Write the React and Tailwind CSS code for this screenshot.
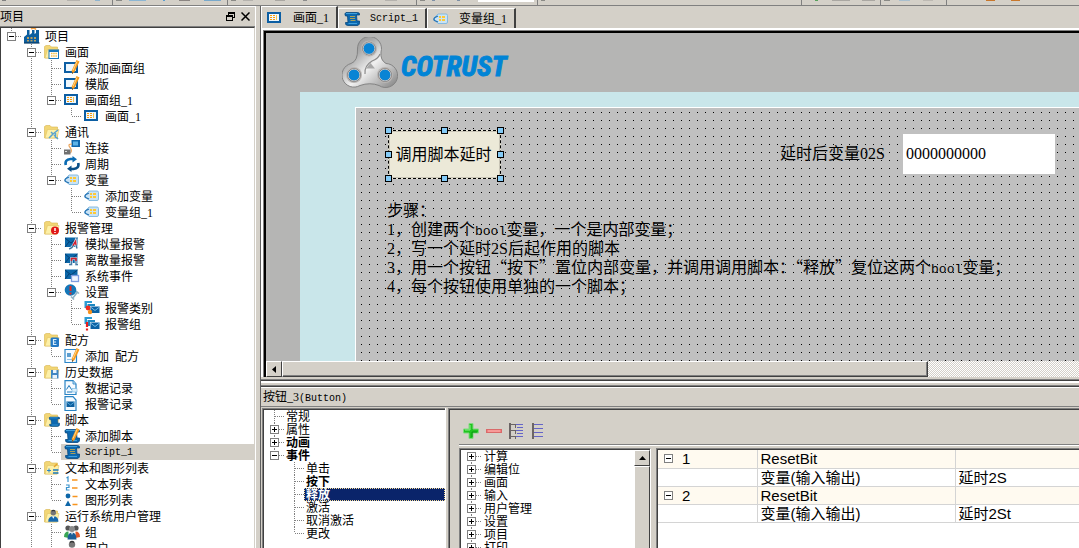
import React from "react";

const CJK = "font-['Liberation_Serif','Noto_Sans_CJK_SC',sans-serif]";

/* ---------- small drawings ---------- */

const Folder = ({ children }) => (
  <>
    <path d="M0.5 14V2.5L2 1.5H6L7.5 3H13.5V14Z" fill="#f2d675" stroke="#d9b64f" strokeWidth="0.6" />
    <path d="M1 14L3.5 5.5H15L13 14Z" fill="#fdf0a8" stroke="#e0c263" strokeWidth="0.6" />
    {children}
  </>
);

const Scroll = () => (
  <>
    <path d="M2 1.500H13.500Q16 1.500 15.500 4H12.500L13 10H15.500Q16 14.500 13 14.500H4Q1 14.500 1.500 11.500H4L3.500 5H1.500Q0 2.500 2 1.500Z" fill="#0c68af" stroke="#07487c" strokeWidth="0.800" />
    <path d="M2 2.500H13M4.500 12.500H13" stroke="#3fa0dc" strokeWidth="1" />
  </>
);

const Pencil = () => (
  <>
    <path d="M12.500 0L15.500 1.500L10.500 12L8 14L7.800 10.500Z" fill="#f79a1e" />
    <path d="M13 1.500L9 10.500" stroke="#ffd98a" strokeWidth="1" />
    <path d="M8 14V12L9.300 12.800Z" fill="#444" />
  </>
);

const Frame = () => (
  <>
    <rect x="0" y="2" width="14" height="11" fill="#0c5ea3" />
    <rect x="2" y="4" width="10" height="7" fill="#eef7fd" />
  </>
);

const Tag = () => (
  <>
    <path d="M5 3H13Q14.500 3 14.500 4.500V11Q14.500 12.500 13 12.500H5L1.500 9V6.500Z" fill="#c9e3f5" stroke="#7db5de" strokeWidth="0.900" />
    <path d="M5 5L2 6.500Q0 8 1.500 9.500L5 11" fill="none" stroke="#2372b4" strokeWidth="1.300" />
    <path d="M6 5h2v2h-2zM9 5h3v2h-3zM6 8h2v2h-2zM9 8h3v2h-3z" fill="#ffc933" />
  </>
);

const Monitor = () => (
  <>
    <path d="M1 1.500H13.500V11H1Z" fill="#0b67a9" />
    <path d="M1 2L7 7L13.500 2M1 11L5 6" stroke="#063f73" strokeWidth="1" fill="none" />
  </>
);

const Envelopes = () => (
  <>
    <path d="M0.500 1H8V3H3V8H0.500Z" fill="#2c9bd2" />
    <path d="M3.500 4H11V6H6V10H3.500Z" fill="#1d87c1" />
    <path d="M6.500 6.500H15.500V13H6.500Z" fill="#0b62a4" />
    <path d="M6.500 7L11 10.500L15.500 7" stroke="#7fc6ee" strokeWidth="0.900" fill="none" />
  </>
);

const Person = () => (
  <>
    <circle cx="8" cy="4.500" r="3.200" fill="#777" />
    <path d="M6 2.500Q8 0.500 10 2.500" stroke="#333" strokeWidth="1.400" fill="none" />
    <path d="M2 15Q2 8.500 8 8.500Q14 8.500 14 15Z" fill="#1769ae" />
    <path d="M6.500 8.500L8 11.500L9.500 8.500Z" fill="#fff" />
  </>
);

const DRAWINGS = {
  project: (
    <>
      <path d="M0 15V9L3 6.500V2H5.500V7L8 5V2H10.500V6L12 5V2H15V15Z" fill="#0d5f9f" />
      <path d="M7 1Q10 -1 12 1.500" stroke="#f6a243" strokeWidth="1.500" fill="none" />
      <path d="M3 9h2v2h-2zM6.500 9h2v2h-2zM10 9h2v2h-2zM3 12h2v1.500h-2zM6.500 12h2v1.500h-2zM10 12h2v1.500h-2z" fill="#b99e61" />
      <path d="M0 15H15.500" stroke="#083b66" strokeWidth="1.200" />
    </>
  ),
  folderScreen: (
    <Folder>
      <rect x="5" y="6" width="9.500" height="8.500" fill="#fff" stroke="#1a77bb" />
      <path d="M5 7H14.500" stroke="#1a77bb" strokeWidth="2" />
      <path d="M7 9.500H13M7 12H13" stroke="#f2c047" strokeWidth="1.500" strokeDasharray="1.500 0.700" />
    </Folder>
  ),
  folderLink: (
    <Folder>
      <path d="M5 14L9 10L7 8M9 10L14 6M10 11L14 15M11.500 9V14" stroke="#5aa3cf" strokeWidth="1.500" fill="none" />
    </Folder>
  ),
  folderAlarm: (
    <Folder>
      <circle cx="11" cy="10.500" r="4" fill="#e01818" />
      <path d="M11 8V11M11 12V13" stroke="#fff" strokeWidth="1.500" />
    </Folder>
  ),
  folderRecipe: (
    <Folder>
      <rect x="6.500" y="5.500" width="8.500" height="9.500" rx="1.500" fill="#2479c4" />
      <path d="M12.500 7.500H9.500V12.500H12.500M9 10H12" stroke="#d6ecfb" strokeWidth="1.200" fill="none" />
    </Folder>
  ),
  folderHistory: (
    <Folder>
      <path d="M7 6H14.500V14.500H7Z" fill="#3f86c2" />
      <path d="M9 6H12.500V9H9ZM8.500 11H13V14.500H8.500Z" fill="#e8f3fb" />
    </Folder>
  ),
  folderScript: (
    <Folder>
      <g transform="translate(4.500 4) scale(0.720)"><Scroll /></g>
    </Folder>
  ),
  folderList: (
    <Folder>
      <path d="M5 8.500V12.500M3 10.500H7" stroke="#2b86c5" strokeWidth="1" />
      <path d="M9 10H14.500M9 13H14.500" stroke="#1b79bf" strokeWidth="1.500" />
      <path d="M10 7L13 4" stroke="#e6a32a" strokeWidth="1.500" />
    </Folder>
  ),
  folderUser: (
    <Folder>
      <g transform="translate(2.500 1) scale(0.850)"><Person /></g>
    </Folder>
  ),
  screenEdit: (<><Frame /><Pencil /></>),
  screen: (
    <>
      <Frame />
      <path d="M3 5h2v1h-2zM6 5h2v1h-2zM3 7h2v1h-2zM6 7h2v1h-2zM3 9h2v1h-2zM6 9h2v1h-2z" fill="#f59a0f" />
      <path d="M9.500 5V10" stroke="#f5c34f" strokeWidth="1" />
    </>
  ),
  connect: (
    <>
      <rect x="7.500" y="0" width="8.500" height="7" fill="#0f66ad" />
      <rect x="9" y="1.500" width="5" height="4" fill="#5db3e8" />
      <path d="M8 4Q3 4 6 7.500Q8.500 10.500 6.500 13" stroke="#eca45a" strokeWidth="1.200" fill="none" />
      <rect x="0" y="9.500" width="6.500" height="5" fill="#707070" />
      <path d="M1 11.500H3" stroke="#ddd" />
    </>
  ),
  cycle: (
    <>
      <path d="M1.800 9Q0.500 3.500 6.500 3H9" stroke="#0b6cb4" strokeWidth="2.700" fill="none" />
      <path d="M8.500 0L13 3.300L8.500 6.500Z" fill="#0b6cb4" />
      <path d="M14.200 7Q15.500 12.500 9.500 13H7" stroke="#0a4f88" strokeWidth="2.700" fill="none" />
      <path d="M7.500 9.500L3 12.800L7.500 16Z" fill="#0a4f88" />
    </>
  ),
  tag: <Tag />,
  analog: (
    <>
      <Monitor />
      <path d="M5 13Q8.500 12 9.500 9L11.500 5L12.500 11L14 12" stroke="#e6f2fa" strokeWidth="2.500" fill="none" />
      <path d="M5 13Q8.500 12 9.500 9" stroke="#3d6f96" strokeWidth="1.300" fill="none" />
      <path d="M9 9.500L11.500 5.500L12 9" stroke="#d11f2f" strokeWidth="1.500" fill="none" />
      <path d="M12 9L13 12.500" stroke="#3d6f96" strokeWidth="1.300" />
    </>
  ),
  discrete: (
    <>
      <Monitor />
      <path d="M5 12.500H7.500V6.500H12V12.500H14" stroke="#e6f2fa" strokeWidth="2.600" fill="none" />
      <path d="M5 12.500H7.500V6.500H12V12.500H14" stroke="#4a7ba2" strokeWidth="1.300" fill="none" />
      <path d="M7.500 9V6.500H12V9" stroke="#d11f2f" strokeWidth="1.500" fill="none" />
    </>
  ),
  event: (
    <>
      <Monitor />
      <rect x="7.500" y="7.500" width="7" height="6" fill="#eff5ff" stroke="#7f9de0" strokeWidth="1.300" />
    </>
  ),
  settings: (
    <>
      <path d="M8.500 14.500L13.500 8M7 12.500L10 15.500M12 7L15 9.500" stroke="#8fb3c7" strokeWidth="1.600" fill="none" />
      <circle cx="6.500" cy="6" r="5.800" fill="#1477b9" />
      <path d="M6.500 2V7M6.500 8.500V10.500" stroke="#e22a24" strokeWidth="2" />
    </>
  ),
  alarmClass: (
    <>
      <Envelopes />
      <circle cx="4" cy="8" r="2.400" fill="#ee2a1e" />
      <circle cx="6" cy="12" r="2.200" fill="#f7931d" />
    </>
  ),
  alarmGroup: (
    <>
      <Envelopes />
      <path d="M3 6V11M3 12.500V14.500" stroke="#ea1d1d" strokeWidth="2.200" />
    </>
  ),
  recipe: (
    <>
      <path d="M1 1.500H12.500V14.500H1Z" fill="#f4faff" stroke="#2c86c8" strokeWidth="1.200" />
      <path d="M3 5H7V9H3Z" fill="#5d9ecf" />
      <path d="M3 11.500H8" stroke="#93c3e6" />
      <Pencil />
    </>
  ),
  dataLog: (
    <>
      <path d="M1 0.700H9L12 4V14.500H1Z" fill="#f6fbff" stroke="#2a84c4" strokeWidth="1.200" />
      <path d="M9 0.700V4H12" fill="#bfe0f5" stroke="#2a84c4" strokeWidth="0.800" />
      <path d="M2.500 9.500L5 5.500L7.500 9.500H11M3 12H8" stroke="#1d76b9" strokeWidth="1" fill="none" />
      <path d="M8 8.500H13V12H8Z" fill="#daeefa" stroke="#6fb3df" strokeWidth="0.600" />
    </>
  ),
  alarmLog: (
    <>
      <path d="M1 0.700H9L12 4V14.500H1Z" fill="#f6fbff" stroke="#2a84c4" strokeWidth="1.200" />
      <path d="M2.500 5.500H10.500V11H2.500Z" fill="#0d5f9f" />
      <path d="M2.500 6L6.500 9L10.500 6" stroke="#5aaee0" strokeWidth="0.900" fill="none" />
    </>
  ),
  scriptEdit: (<><Scroll /><Pencil /></>),
  script: (
    <>
      <Scroll />
      <path d="M6 5.500H11M6 7.500H11M6.500 9.500H11.500" stroke="#a9a05a" strokeWidth="1" />
    </>
  ),
  textList: (
    <>
      <path d="M2.500 2L4 1V6M2 9H5V11.500H2.500V14H5.500" stroke="#3a93cd" strokeWidth="1.200" fill="none" />
      <path d="M8 4H13.500M8 12H13.500" stroke="#f7941e" strokeWidth="1.700" />
    </>
  ),
  graphicList: (
    <>
      <circle cx="4" cy="4" r="2.400" fill="#0d66a8" />
      <path d="M1 14L4 8.500L7 14Z" fill="#0d66a8" />
      <path d="M8.500 4.500H13.500M8.500 12.500H13.500" stroke="#f7941e" strokeWidth="1.700" />
    </>
  ),
  group: (
    <>
      <circle cx="4" cy="4" r="2.600" fill="#555" />
      <circle cx="12" cy="4" r="2.600" fill="#555" />
      <path d="M0 13Q0 7.500 4.500 7.500V14Z" fill="#3aa655" />
      <path d="M16 13Q16 7.500 11.500 7.500V14Z" fill="#e2592b" />
      <circle cx="8" cy="5" r="3" fill="#8c8c8c" />
      <path d="M3.500 15.500Q3.500 8.500 8 8.500Q12.500 8.500 12.500 15.500Z" fill="#1c5d96" />
      <path d="M7 8.500L8 11L9 8.500Z" fill="#fff" />
    </>
  ),
  user: <Person />,
};

const Icon = ({ name }) => (
  <svg viewBox="0 0 16 16" className="size-4 shrink-0" aria-hidden="true">
    {DRAWINGS[name]}
  </svg>
);

/* ---------- tree pieces ---------- */

// One 20px column of connector lines, with the optional +/- box.
function Connector({ up, down, arm, box, height }) {
  const mid = height === 16 ? 8 : 6;
  return (
    <svg width="20" height={height} viewBox={`0 0 20 ${height}`} className="block shrink-0" shapeRendering="crispEdges">
      <g stroke="#808080" strokeDasharray="1 1">
        {up && <path d={`M10.500 0V${mid}`} />}
        {down && <path d={`M10.500 ${mid}V${height}`} />}
        {arm && <path d={`M11 ${mid + 0.5}H20`} />}
      </g>
      {box && (
        <>
          <rect x="6.500" y={mid - 3.5} width="8" height="8" fill="#fff" stroke="#808080" />
          <path d={`M8 ${mid + 0.5}H13`} stroke="#000" />
          {box === "+" && <path d={`M10.500 ${mid - 2}V${mid + 3}`} stroke="#000" />}
        </>
      )}
    </svg>
  );
}

function Toggle({ box, label, ...rest }) {
  if (!box) return <Connector {...rest} />;
  return (
    <button type="button" aria-label={label} aria-expanded={box === "-"} className="block shrink-0">
      <Connector box={box} {...rest} />
    </button>
  );
}

// [depth, icon, label, box, last sibling, text kind]
const PROJECT = [
  [0, "project", "项目", "-", true],
  [1, "folderScreen", "画面", "-"],
  [2, "screenEdit", "添加画面组"],
  [2, "screenEdit", "模版"],
  [2, "screen", "画面组_1", "-", true],
  [3, "screen", "画面_1", "", true],
  [1, "folderLink", "通讯", "-"],
  [2, "connect", "连接"],
  [2, "cycle", "周期"],
  [2, "tag", "变量", "-", true],
  [3, "tag", "添加变量"],
  [3, "tag", "变量组_1", "", true],
  [1, "folderAlarm", "报警管理", "-"],
  [2, "analog", "模拟量报警"],
  [2, "discrete", "离散量报警"],
  [2, "event", "系统事件"],
  [2, "settings", "设置", "-", true],
  [3, "alarmClass", "报警类别"],
  [3, "alarmGroup", "报警组", "", true],
  [1, "folderRecipe", "配方", "-"],
  [2, "recipe", "添加  配方", "", true],
  [1, "folderHistory", "历史数据", "-"],
  [2, "dataLog", "数据记录"],
  [2, "alarmLog", "报警记录", "", true],
  [1, "folderScript", "脚本", "-"],
  [2, "scriptEdit", "添加脚本"],
  [2, "script", "Script_1", "", true, "mono"],
  [1, "folderList", "文本和图形列表", "-"],
  [2, "textList", "文本列表"],
  [2, "graphicList", "图形列表", "", true],
  [1, "folderUser", "运行系统用户管理", "-"],
  [2, "group", "组"],
  [2, "user", "用户"],
];

function ProjectRow({ row }) {
  const [depth, icon, label, box, last, kind] = row;
  const selected = kind === "mono";
  return (
    <li className="flex h-4 items-center whitespace-pre">
      {Array.from({ length: depth }, (_, i) => (
        <Connector key={i} height={16} up={i === 1} down={i === 1} />
      ))}
      <Toggle box={box} label={label} height={16} up={true} down={!last} arm />
      <span className={`flex h-4 flex-1 items-center gap-[5px] pl-[3px] ${selected ? "bg-[#d4d0c8]" : ""}`}>
        <Icon name={icon} />
        <span className={kind === "mono" ? "pt-px font-['Liberation_Mono',monospace] text-[10px]" : "pt-px"}>{label}</span>
      </span>
    </li>
  );
}

const PROPERTIES = [
  [0, "常规"],
  [0, "属性", "+"],
  [0, "动画", "+", true],
  [0, "事件", "-", true],
  [1, "单击"],
  [1, "按下", "", true],
  [1, "释放", "", true],
  [1, "激活"],
  [1, "取消激活"],
  [1, "更改"],
];

const FUNCTIONS = ["计算", "编辑位", "画面", "输入", "用户管理", "设置", "项目", "打印"];

const INSET = "border-t border-l border-[#808080]";
const INSET_IN = "border-t border-l border-[#404040]";

/* ---------- top strip ---------- */

const STRIP = [
  [2, 4, "#808080"], [67, 13, "#b5b2ad"], [95, 5, "#8fb4cf"], [112, 1, "#808080"], [116, 6, "#8a8a86"],
  [129, 17, "#8cb6d3"], [163, 2, "#5b9ed0"], [179, 11, "#8b8582"], [204, 17, "#79a9cb"], [227, 1, "#808080"],
  [231, 5, "#8a8a86"], [243, 10, "#b5b2ad"], [275, 10, "#aaa7a2"], [303, 4, "#8c8c8c"], [350, 10, "#aaa7a2"],
  [385, 12, "#b5b2ad"], [416, 1, "#808080"], [420, 5, "#8a8a86"], [432, 3, "#7d8fa5"], [457, 3, "#7d8fa5"],
  [478, 56, "#ffffff"], [537, 1, "#808080"], [541, 4, "#8a8a86"], [801, 1, "#808080"], [815, 3, "#58a05c"],
  [832, 18, "#aaa7a2"], [862, 13, "#aaa7a2"], [880, 1, "#808080"], [884, 6, "#8a8a86"], [899, 11, "#a9bfce"],
  [923, 10, "#bdb9b3"], [946, 1, "#808080"], [986, 9, "#c8772c"], [1011, 9, "#c8772c"],
];

function ToolbarEdge() {
  return (
    <div className="h-[6px] shrink-0 overflow-hidden border-b border-[#808080]">
      <svg width="1079" height="5" shapeRendering="crispEdges" aria-hidden="true" className="block">
        {STRIP.map(([x, w, c]) => (
          <rect key={x} x={x} y="0" width={w} height={w === 1 ? 5 : w === 56 ? 2 : 1} fill={c} />
        ))}
      </svg>
    </div>
  );
}

/* ---------- sidebar ---------- */

function Sidebar() {
  return (
    <aside className="flex w-64 shrink-0 flex-col overflow-hidden border-r border-white">
      <header className="flex h-5 shrink-0 items-center justify-between border-t border-white pr-[5px]">
        <h2>项目</h2>
        <div className="flex items-center gap-[6px]">
          <button type="button" aria-label="还原">
            <svg width="9" height="9" shapeRendering="crispEdges" fill="none" stroke="#000">
              <path d="M2.500 3V0.500H8.500V5.500H6M2 1.500H9" />
              <path d="M0.500 3.500H6V8.500H0.500ZM0 4.500H6" />
            </svg>
          </button>
          <button type="button" aria-label="关闭">
            <svg width="9" height="9" stroke="#000" strokeWidth="1.500"><path d="M0.500 0.500L8.500 8.500M8.500 0.500L0.500 8.500" /></svg>
          </button>
        </div>
      </header>
      <div className="flex min-h-0 flex-1 flex-col border-t border-[#808080]">
        <ul className="min-h-0 flex-1 overflow-hidden border-t border-r border-l border-[#404040] border-r-[#d4d0c8] bg-white">
          {PROJECT.map((row, i) => <ProjectRow key={i} row={row} />)}
        </ul>
      </div>
    </aside>
  );
}

/* ---------- editor ---------- */

function Tab({ icon, active, children }) {
  return (
    <button
      type="button"
      role="tab"
      aria-selected={!!active}
      className={`flex items-center gap-[10px] border-t border-r-2 border-l border-white border-r-[#404040] pr-[7px] pl-[5px] ${active ? "h-[22px]" : "h-5"}`}
    >
      <Icon name={icon} />
      {children}
    </button>
  );
}

function Logo() {
  return (
    <svg width="56" height="52" viewBox="0 0 56 52" aria-hidden="true">
      <defs>
        <linearGradient id="steel" x1="0" y1="0" x2="1" y2="1">
          <stop offset="0" stopColor="#858585" />
          <stop offset="0.300" stopColor="#a9a9a9" />
          <stop offset="0.550" stopColor="#f0f0f0" />
          <stop offset="1" stopColor="#7f7f7f" />
        </linearGradient>
      </defs>
      <path d="M15.500 12A12 12 0 1 1 39 15Q38 23 44 26.500A12 12 0 1 1 37 48.500Q28 45 18 48.500A12 12 0 1 1 9 26.500Q16 24 15.500 12Z" fill="url(#steel)" stroke="#838383" strokeWidth="1" />
      <path d="M38 17Q36 22 30 24Q22 29 23 37" fill="none" stroke="#8a8a8a" strokeWidth="1.200" />
      <path d="M24 31.500L28.500 26L33 31.500Z" fill="#a8a8a8" />
      {[[27, 11.5], [12, 38], [43, 38]].map(([x, y]) => (
        <g key={x}>
          <circle cx={x} cy={y} r="8" fill="#b9b6b4" />
          <circle cx={x} cy={y} r="6.300" fill="#0a84d4" stroke="#6d5a52" strokeWidth="0.800" />
          <circle cx={x} cy={y} r="5.900" fill="none" stroke="#d8cfca" strokeWidth="0.900" />
        </g>
      ))}
    </svg>
  );
}

const HANDLES = [
  "-left-1 -top-1", "left-[52px] -top-1", "-right-1 -top-1",
  "-left-1 top-5", "-right-1 top-5",
  "-left-1 -bottom-1", "left-[52px] -bottom-1", "-right-1 -bottom-1",
];

const Latin = ({ children }) => <span className="font-['Liberation_Mono',monospace] text-[13px] leading-none">{children}</span>;
const Wide = ({ children }) => <span className="font-['Noto_Sans_CJK_SC',sans-serif] leading-none">{children}</span>;

function Canvas() {
  return (
    <div className="flex min-h-0 flex-1 flex-col overflow-hidden bg-[#b5b5b4]">
      <div className="flex h-[59px] shrink-0 items-center gap-[3px] pl-[76px]">
        <Logo />
        <span className="pt-2 font-['Liberation_Sans_Narrow','Roboto_Condensed','Liberation_Sans',sans-serif] text-[28px] leading-none font-bold text-[#0084d6] italic [-webkit-text-stroke:1px_#0084d6]">
          COTRUST
        </span>
      </div>
      <div className="ml-[34px] flex min-h-0 flex-1 bg-[#c9e6ea] pt-[15px] pl-[55px]">
        <div className="relative flex-1 overflow-hidden border-t border-l border-white bg-[#c0c0c0] bg-[conic-gradient(at_1px_1px,transparent_75%,#000_0)] bg-[length:8px_8px] bg-[position:5px_4px] text-base">
          <button type="button" className="absolute top-[22px] left-8 h-[49px] w-[113px] border border-dashed border-black bg-[#ece9d8] pr-[2px] outline-1 -outline-offset-2 outline-[#c8c4b6]">
            调用脚本延时
            {HANDLES.map((pos) => (
              <span key={pos} className={`absolute size-[7px] border border-black bg-[#84cbf7] ${pos}`} />
            ))}
          </button>
          <label htmlFor="delayed" className="absolute top-[34px] left-[424px] leading-6 whitespace-nowrap">延时后变量02S</label>
          <input id="delayed" defaultValue="0000000000" className="absolute top-[26px] left-[547px] h-10 w-[152px] bg-white px-[3px] outline-none" />
          <div className="absolute top-[93px] left-[31px] leading-[19px] whitespace-nowrap">
            <p>步骤：</p>
            <p>1，创建两个<Latin>bool</Latin>变量，一个是内部变量；</p>
            <p>2，写一个延时2S后起作用的脚本</p>
            <p>3，<Wide>用一个按钮“按下”置位内部变量，并调用调用脚本：“释放”复位这两个</Wide><Latin>bool</Latin>变量；</p>
            <p>4，每个按钮使用单独的一个脚本；</p>
          </div>
        </div>
      </div>
    </div>
  );
}

function HorizontalScroll() {
  return (
    <div className="flex h-4 shrink-0 bg-[repeating-conic-gradient(#fff_0_25%,#d4d0c8_0_50%)] bg-[length:2px_2px]">
      <button type="button" aria-label="向左" className="flex w-4 shrink-0 items-center justify-center border border-white border-r-[#404040] border-b-[#404040] bg-[#d4d0c8]">
        <svg width="4" height="7"><path d="M4 0V7L0 3.500Z" /></svg>
      </button>
      <div className="w-[calc(80%-4px)] border border-white border-r-[#404040] border-b-[#404040] bg-[#d4d0c8] shadow-[inset_-1px_-1px_0_#808080]" />
    </div>
  );
}

/* ---------- properties pane ---------- */

function PropertyTree() {
  return (
    <div className={`flex w-[183px] shrink-0 ${INSET}`}>
      <ul className={`flex-1 bg-white ${INSET_IN}`}>
        {PROPERTIES.map(([depth, label, box, bold], i) => (
          <li key={label} className={`flex h-[13px] items-center leading-[15px] ${bold ? "font-bold" : ""}`}>
            {depth === 1 && <span className="w-5 shrink-0" />}
            <Toggle box={box} label={label} height={13} up down={i !== 3 && i !== 9} arm />
            <span className={`h-[13px] flex-1 pl-[2px] ${label === "释放" ? "bg-[#0a246a] text-white outline-1 -outline-offset-1 outline-[#f5db95] outline-dotted" : ""}`}>
              {label}
            </span>
          </li>
        ))}
      </ul>
    </div>
  );
}

function FunctionToolbar() {
  return (
    <div className="flex h-[35px] shrink-0 items-end gap-[7px] border-b border-[#808080] pb-[5px] pl-1">
      <button type="button" aria-label="添加">
        <svg width="16" height="16" className="block">
          <path d="M6 0.500H10V6H15.500V10H10V15.500H6V10H0.500V6H6Z" fill="#1fc41f" stroke="#7fd87f" />
          <path d="M7 2V7H2" stroke="#8df08a" fill="none" />
          <path d="M9 14V9H14" stroke="#0c9a12" fill="none" />
        </svg>
      </button>
      <button type="button" aria-label="删除">
        <svg width="16" height="16" className="block"><rect x="0.500" y="6.500" width="15" height="3" fill="#f08080" stroke="#d96a6a" /><path d="M2 8H14" stroke="#ffb4b0" /></svg>
      </button>
      <button type="button" aria-label="展开">
        <svg width="16" height="16" className="block" shapeRendering="crispEdges" fill="none">
          <path d="M1 0V16" stroke="#6b6565" strokeWidth="2" />
          <path d="M2 1.500H7M2 7.500H7M2 13.500H7M6.500 1V5M6.500 8V11M6.500 13V16" stroke="#6b6565" />
          <path d="M7 1.500H14M8 4.500H14M7 7.500H14M8 10.500H14M7 13.500H14" stroke="#6464c8" />
        </svg>
      </button>
      <button type="button" aria-label="折叠">
        <svg width="12" height="16" className="block" shapeRendering="crispEdges" fill="none">
          <path d="M1 0V16" stroke="#6b6565" strokeWidth="2" />
          <path d="M2 1.500H11M2 5.500H11M2 9.500H11M2 13.500H11" stroke="#6464c8" />
        </svg>
      </button>
    </div>
  );
}

const CALLS = [
  ["1", "ResetBit", ""],
  ["", "变量(输入输出)", "延时2S"],
  ["2", "ResetBit", ""],
  ["", "变量(输入输出)", "延时2St"],
];

function CallTable() {
  return (
    <div className={`flex min-w-0 flex-1 ${INSET}`}>
      <div className={`min-w-0 flex-1 bg-white ${INSET_IN}`}>
        <table className="w-full table-fixed border-collapse font-['Liberation_Sans','Noto_Sans_CJK_SC',sans-serif] text-[15px] leading-[17px]">
          <colgroup>
            <col className="w-[99px]" />
            <col className="w-[198px]" />
            <col />
          </colgroup>
          <tbody>
            {CALLS.map(([num, name, value], i) => (
              <tr key={i} className={`h-[18px] border-b border-[#d4d4d4] ${num ? "bg-[#fffaf0]" : ""}`}>
                <td className="border-r border-[#d4d4d4] p-0">
                  {num && (
                    <span className="flex h-[17px] items-center">
                      <button type="button" aria-label="折叠" className="ml-[6px] mr-[9px] flex size-[9px] items-center justify-center border border-[#808080] bg-white">
                        <span className="h-px w-[5px] bg-black" />
                      </button>
                      {num}
                    </span>
                  )}
                </td>
                <td className="border-r border-[#d4d4d4] p-0 pl-[3px] whitespace-nowrap"><span className="block h-[17px]">{name}</span></td>
                <td className="p-0 pl-[3px] whitespace-nowrap"><span className="block h-[17px]">{value}</span></td>
              </tr>
            ))}
          </tbody>
        </table>
      </div>
    </div>
  );
}

function FunctionTree() {
  return (
    <div className={`flex w-48 shrink-0 border-r border-r-white ${INSET}`}>
      <div className={`flex min-w-0 flex-1 bg-white ${INSET_IN}`}>
        <ul className="flex-1 overflow-hidden">
          {FUNCTIONS.map((label, i) => (
            <li key={label} className="flex h-[13px] items-center">
              <Toggle box="+" label={label} height={13} up={i > 0} down arm />
              <span className="h-[13px] pl-[3px] leading-[15px]">{label}</span>
            </li>
          ))}
        </ul>
        <div className="flex w-4 shrink-0 flex-col bg-[#d4d0c8]">
          <button type="button" aria-label="向上" className="flex h-4 items-center justify-center border border-white border-r-[#404040] border-b-[#404040]">
            <svg width="7" height="4"><path d="M0 4H7L3.500 0Z" /></svg>
          </button>
          <div className="flex-1 border border-b-0 border-white border-r-[#404040]" />
        </div>
      </div>
    </div>
  );
}

function Properties() {
  return (
    <section className="flex h-[171px] shrink-0 flex-col">
      <div className="h-[2px] shrink-0" />
      <div className="h-[2px] shrink-0 border-t border-[#808080] bg-[#404040]" />
      <div className="h-[2px] shrink-0 bg-white" />
      <div className="h-[2px] shrink-0" />
      <div className="h-[2px] shrink-0 border-t border-[#808080] bg-[#404040]" />
      <h2 className="h-[20px] shrink-0 border-t border-b border-white border-b-[#808080] pl-[2px] leading-[18px]">
        按钮_3<span className="font-['Liberation_Mono',monospace] text-[10px] leading-none">(Button)</span>
      </h2>
      <div className="mt-px ml-px flex min-h-0 flex-1 overflow-hidden">
        <PropertyTree />
        <div className="w-[3px] shrink-0 border-l border-white" />
        <div className={`flex min-w-0 flex-1 ${INSET}`}>
          <div className={`flex min-w-0 flex-1 flex-col pl-[9px] ${INSET_IN}`}>
            <FunctionToolbar />
            <div className="flex min-h-0 flex-1 gap-[5px] border-t border-white pt-[2px]">
              <FunctionTree />
              <CallTable />
            </div>
          </div>
        </div>
      </div>
    </section>
  );
}

export default function App() {
  return (
    <div className={`flex h-screen flex-col overflow-hidden bg-[#d4d0c8] text-xs text-black ${CJK}`}>
      <ToolbarEdge />
      <div className="flex min-h-0 flex-1">
        <Sidebar />
        <div className="w-[5px] shrink-0 border-r border-[#606060]" />
        <main className="flex min-w-0 flex-1 flex-col">
          <div role="tablist" className="flex h-[22px] shrink-0 items-end">
            <Tab icon="screen" active>画面_1</Tab>
            <Tab icon="script"><span className="font-['Liberation_Mono',monospace] text-[10px]">Script_1</span></Tab>
            <Tab icon="tag">变量组_1</Tab>
          </div>
          <div className="flex min-h-0 flex-1 flex-col border-t-2 border-l-2 border-white">
            <div className="flex min-h-0 flex-1 flex-col border-t border-l border-[#808080]">
              <div className="flex min-h-0 flex-1 flex-col border-t-2 border-l-2 border-black">
                <Canvas />
                <HorizontalScroll />
              </div>
            </div>
          </div>
          <Properties />
        </main>
      </div>
    </div>
  );
}
